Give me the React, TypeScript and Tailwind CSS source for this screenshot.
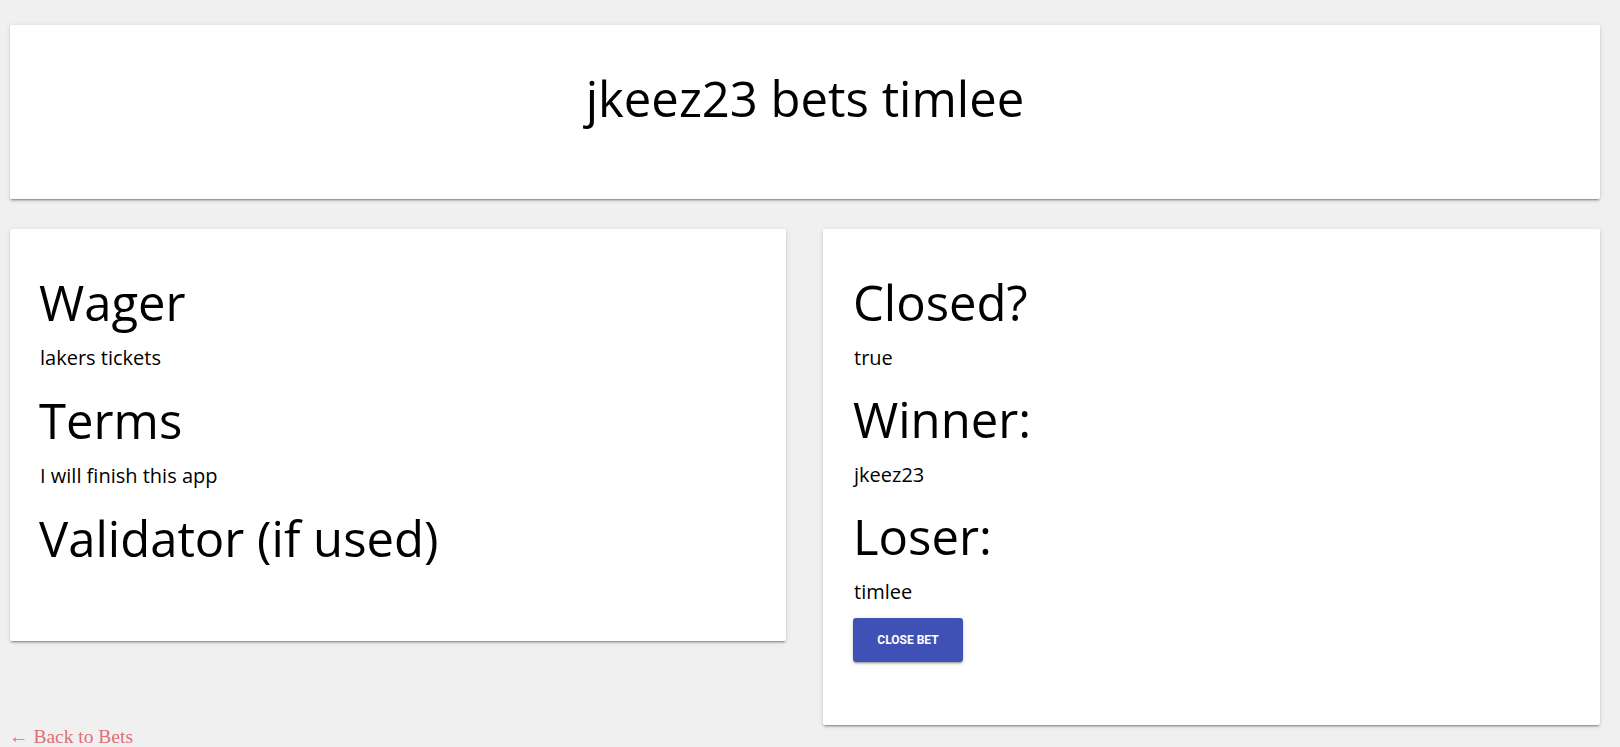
type Field = {
  label: string;
  value?: string;
};

const betInfo: Field[] = [
  { label: "Wager", value: "lakers tickets" },
  { label: "Terms", value: "I will finish this app" },
  { label: "Validator (if used)" },
];

const betStatus: Field[] = [
  { label: "Closed?", value: "true" },
  { label: "Winner:", value: "jkeez23" },
  { label: "Loser:", value: "timlee" },
];

const cardShadow =
  "shadow-[0_2px_2px_0_rgba(0,0,0,0.14),0_3px_1px_-2px_rgba(0,0,0,0.2),0_1px_5px_0_rgba(0,0,0,0.12)]";

function FieldList({ fields, gap }: { fields: Field[]; gap: string }) {
  return (
    <div className={`flex flex-col ${gap}`}>
      {fields.map((field) => (
        <div key={field.label}>
          <h2 className="text-[49px] leading-[48px] font-normal">{field.label}</h2>
          {field.value && (
            <p className="mt-[18px] pl-[1px] text-[20px] leading-[28px]">{field.value}</p>
          )}
        </div>
      ))}
    </div>
  );
}

export default function App() {
  return (
    <div
      className="min-h-screen bg-[#f0f0f0] pl-[10px] pr-[20px] pt-[25px] text-black"
      style={{ fontFamily: '"Open Sans", sans-serif' }}
    >
      <div className={`bg-white rounded-[2px] pt-[49px] pb-[77px] text-center ${cardShadow}`}>
        <h1 className="text-[49px] leading-[48px] font-normal">jkeez23 bets timlee</h1>
      </div>

      <div className="mt-[30px] flex items-start gap-[37px]">
        <div className={`flex-1 bg-white rounded-[2px] pl-[29px] pt-[49px] pb-[79px] ${cardShadow}`}>
          <FieldList fields={betInfo} gap="gap-[24px]" />
        </div>
        <div className={`flex-1 bg-white rounded-[2px] pl-[30px] pt-[49px] pb-[63px] ${cardShadow}`}>
          <FieldList fields={betStatus} gap="gap-[23px]" />
          <button
            className={`mt-[12px] h-[44px] w-[110px] rounded-[3px] bg-[#3f51b5] text-white text-[12px] font-bold uppercase ${cardShadow}`}
            style={{ fontFamily: "Roboto, sans-serif" }}
          >
            Close Bet
          </button>
        </div>
      </div>

      <a
        href="#"
        className="mt-[2px] -ml-[1px] block w-fit text-[19.5px] leading-[20px] text-[#e06f78]"
        style={{ fontFamily: '"Liberation Serif", serif' }}
      >
        ← Back to Bets
      </a>
    </div>
  );
}
